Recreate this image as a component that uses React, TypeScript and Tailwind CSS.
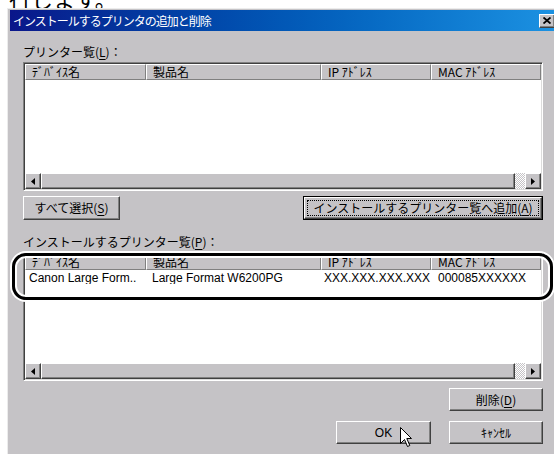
import React from "react";

const JP = "font-['Noto_Sans_CJK_JP',sans-serif]";
const LAT = "font-['Liberation_Sans','Noto_Sans_CJK_JP',sans-serif]";
const FACE = "bg-[#c5c3c6]";
const RAISED =
  "border border-t-white border-l-white border-r-[#404040] border-b-[#404040] shadow-[inset_-1px_-1px_0_#808080]";

function U({ c }: { c: string }) {
  return <span className="underline underline-offset-[2px]">{c}</span>;
}

const COLS = ["w-[121px]", "w-[175px]", "w-[110px]", "w-[110px]"];
const HEADS = ["ﾃﾞﾊﾞｲｽ名", "製品名", "IP ｱﾄﾞﾚｽ", "MAC ｱﾄﾞﾚｽ"];

function Header() {
  return (
    <div className={`flex h-[16px] shrink-0 ${JP} text-[12px] leading-[14px]`}>
      {HEADS.map((h, i) => (
        <div
          key={h}
          className={`${COLS[i]} ${FACE} border border-t-white border-l-white border-r-[#808080] border-b-[#808080] pl-[6px] whitespace-nowrap overflow-hidden`}
        >
          {h}
        </div>
      ))}
    </div>
  );
}

function Arrow({ dir }: { dir: "l" | "r" }) {
  return (
    <div className={`w-[16px] h-[16px] ${FACE} ${RAISED} flex items-center justify-center`}>
      <svg width="4" height="7" viewBox="0 0 4 7">
        {dir === "l" ? <path d="M4 0 L0 3.5 L4 7 Z" fill="#000" /> : <path d="M0 0 L4 3.5 L0 7 Z" fill="#000" />}
      </svg>
    </div>
  );
}

function HScroll() {
  return (
    <div className="flex h-[16px] shrink-0">
      <Arrow dir="l" />
      <div className={`w-[474px] h-[16px] ${FACE} ${RAISED}`} />
      <div className="flex-1 bg-[repeating-conic-gradient(#c5c3c6_0_25%,#ffffff_0_50%)] bg-[length:2px_2px]" />
      <Arrow dir="r" />
    </div>
  );
}

function ListBox({ children }: { children?: React.ReactNode }) {
  return (
    <div className="w-[520px] h-[129px] flex flex-col bg-white border border-t-[#808080] border-l-[#808080] border-r-white border-b-white p-[1px] shadow-[inset_1px_1px_0_#404040,inset_-1px_-1px_0_#dcdcdc]">
      <Header />
      <div className="flex-1">{children}</div>
      <HScroll />
    </div>
  );
}

function Btn({ w, h, children }: { w: string; h: string; children: React.ReactNode }) {
  return (
    <div className={`${w} ${h} ${FACE} ${RAISED} flex items-center justify-center ${JP} text-[12px] leading-none`}>
      {children}
    </div>
  );
}

function DefaultBtn({ w, children }: { w: string; children: React.ReactNode }) {
  return (
    <div className={`${w} h-[24px] border border-black flex`}>
      <div className={`flex-1 ${FACE} ${RAISED} p-[2px] flex`}>
        <div className={`flex-1 border border-dotted border-black flex items-center justify-center ${JP} text-[12px] leading-none whitespace-nowrap`}>
          {children}
        </div>
      </div>
    </div>
  );
}

export default function App() {
  return (
    <div className="relative w-[554px] h-[454px] overflow-hidden bg-white text-black">
      <div className="h-[8px] overflow-hidden">
        <div className={`${JP} text-[22px] leading-[22px] -mt-[13px] pl-[9px] whitespace-nowrap`}>行します。</div>
      </div>

      <div className="ml-[7px] w-[552px] h-[446px] bg-[#c5c3c6] border-t border-l border-t-[#ececec] border-l-[#ececec] pt-[1px] pl-[2px] pr-[2px]">
        <div className="h-[21px] flex items-center bg-linear-to-r from-[#0a168a] to-[#1c92e2] pl-[3px] pr-[2px]">
          <span className={`${JP} text-[12px] leading-none text-white tracking-[-1px] whitespace-nowrap`}>
            インストールするプリンタの追加と削除
          </span>
          <div className={`ml-auto w-[16px] h-[14px] ${FACE} ${RAISED} flex items-center justify-center`}>
            <svg width="8" height="7" viewBox="0 0 8 7">
              <path d="M0.5 0.5 L7.5 6.5 M7.5 0.5 L0.5 6.5" stroke="#000" strokeWidth="1.8" />
            </svg>
          </div>
        </div>

        <div className="pl-[13px]">
          <div className={`mt-[13px] h-[16px] leading-[16px] text-[12px] ${JP} whitespace-nowrap`}>
            プリンター覧(<U c="L" />)：
          </div>
          <div className="mt-[2px]">
            <ListBox />
          </div>
          <div className="mt-[5px] flex w-[520px] justify-between">
            <Btn w="w-[97px]" h="h-[24px]">
              すべて選択(<U c="S" />)
            </Btn>
            <DefaultBtn w="w-[240px]">
              インストールするプリンター覧へ追加(<U c="A" />)
            </DefaultBtn>
          </div>
          <div className={`mt-[14px] h-[16px] leading-[16px] text-[12px] ${JP} whitespace-nowrap`}>
            インストールするプリンター覧(<U c="P" />)：
          </div>
          <div className="mt-[2px]">
            <ListBox>
              <div className={`flex h-[16px] items-center text-[12px] leading-none ${LAT} whitespace-nowrap`}>
                <div className="w-[121px] pl-[4px] overflow-hidden">Canon Large Form..</div>
                <div className="w-[175px] pl-[6px] overflow-hidden">Large Format W6200PG</div>
                <div className="w-[110px] pl-[3px] overflow-hidden">XXX.XXX.XXX.XXX</div>
                <div className="w-[110px] pl-[7px] overflow-hidden">000085XXXXXX</div>
              </div>
            </ListBox>
          </div>
          <div className="mt-[7px] flex w-[520px] justify-end">
            <Btn w="w-[94px]" h="h-[23px]">
              削除(<U c="D" />)
            </Btn>
          </div>
          <div className="mt-[10px] flex w-[520px] justify-end gap-[18px]">
            <Btn w="w-[95px]" h="h-[23px]">
              <span className={LAT}>OK</span>
            </Btn>
            <Btn w="w-[94px]" h="h-[23px]">
              ｷｬﾝｾﾙ
            </Btn>
          </div>
        </div>
      </div>

      {/* rounded callout around the added printer row */}
      <div className="absolute left-[12px] top-[253px] w-[541px] h-[47px] rounded-[14px] border-[3px] border-black shadow-[0_0_0_2px_#ffffff,inset_0_0_0_2px_#ffffff]" />

      {/* mouse pointer over the OK button */}
      <svg className="absolute left-[400px] top-[427px]" width="13" height="21" viewBox="0 0 13 21">
        <path d="M0.5 0.5 L0.5 16.5 L4.5 12.5 L7.5 19.5 L9.8 18.5 L6.8 11.5 L11.5 11.5 Z" fill="#fff" stroke="#000" strokeWidth="1" />
      </svg>
    </div>
  );
}
